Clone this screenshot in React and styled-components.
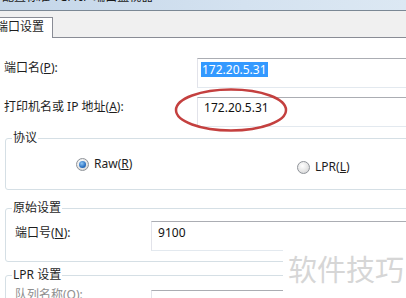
import React from 'react';
import styled, { createGlobalStyle } from 'styled-components';

const GlobalStyle = createGlobalStyle`
 html, body {
   margin: 0;
   padding: 0;
   background: #fff;
   overflow: hidden;
 }
`;

const Frame = styled.div`
 position: relative;
 width: 406px;
 height: 298px;
 overflow: hidden;
 background: #fff;
 font-family: "Noto Sans", "Noto Sans CJK SC", sans-serif;
 font-size: 12px;
 line-height: 16px;
 color: #1e1e1e;
`;

const TitleStrip = styled.div`
 height: 10px;
 display: flex;
 align-items: flex-end;
 overflow: hidden;
 padding-left: 2px;
 background: linear-gradient(90deg, #c3d5e8 0%, #d4e2f0 60%, #dce8f3 100%);
 border-bottom: 1px solid #7b8895;
`;

const TitleText = styled.div`
 margin-bottom: 5px;
 white-space: nowrap;
 color: #1a1a1a;
`;

const TabStrip = styled.div`
 box-sizing: border-box;
 height: 27px;
 display: flex;
 align-items: flex-end;
 background: #f0f0f0;
 border-bottom: 1px solid #898c95;
`;

const Tab = styled.div`
 position: relative;
 box-sizing: border-box;
 height: 21px;
 margin: 0 0 -1px -4px;
 padding: 1px 8px 0 0;
 background: #fff;
 border-top: 1px solid #898c95;
 border-right: 1px solid #898c95;
 white-space: nowrap;
`;

const Content = styled.div`
 padding-top: 20px;
 width: 470px;
`;

const FormRow = styled.div`
 display: grid;
 grid-template-columns: ${p => p.$labelWidth}px 280px;
 align-items: start;
 padding-left: ${p => p.$indent}px;
 margin-top: ${p => p.$top || 0}px;
`;

const Label = styled.div`
 padding-top: ${p => p.$pad}px;
 white-space: nowrap;
 color: ${p => (p.$disabled ? '#8e8e8e' : '#1e1e1e')};
`;

const Field = styled.div`
 box-sizing: border-box;
 height: 30px;
 margin-top: ${p => p.$mt || 0}px;
 padding: ${p => p.$pad}px 4px 0 3px;
 border: 1px solid;
 border-color: #abadb3 #dbdfe6 #e3e9ef #e2e3ea;
 background: #fff;
 white-space: nowrap;
 color: #111;
`;

const Selected = styled.span`
 display: inline-block;
 padding: 0 1px;
 line-height: 15px;
 background: #3399ff;
 color: #fff;
`;

const Group = styled.fieldset`
 margin: ${p => p.$top}px 0 0 5px;
 padding: ${p => p.$padTop}px 0 ${p => p.$padBottom}px 0;
 border: 1px solid #d5dfe5;
 border-radius: 3px;
 min-width: 0;
`;

const Legend = styled.legend`
 margin-left: 6px;
 padding: 0 1px;
 line-height: 16px;
`;

const Options = styled.div`
 display: grid;
 grid-template-columns: 221px auto;
 align-items: start;
 padding-left: 70px;
`;

const Option = styled.div`
 display: flex;
 align-items: center;
 gap: 5px;
 margin-top: ${p => p.$drop || 0}px;
`;

const Radio = styled.span`
 position: relative;
 box-sizing: border-box;
 width: 13px;
 height: 13px;
 border-radius: 50%;
 border: 1px solid #8f9399;
 background: radial-gradient(circle at 40% 35%, #ffffff 0%, #e6e6e6 55%, #c9cbce 100%);

 &::after {
   content: '';
   display: ${p => (p.$checked ? 'block' : 'none')};
   position: absolute;
   left: 2px;
   top: 2px;
   width: 7px;
   height: 7px;
   border-radius: 50%;
   background: radial-gradient(circle at 40% 35%, #8fc6f5 0%, #2a71c2 60%, #164d91 100%);
 }
`;

const Ellipse = styled.svg`
 position: absolute;
 left: 174px;
 top: 87px;
 overflow: visible;
`;

const Watermark = styled.div`
 position: absolute;
 right: 0;
 bottom: 0;
 box-sizing: border-box;
 width: 123px;
 height: 53px;
 padding: 8px 0 0 5px;
 background: #fff;
 font-family: "Noto Sans CJK SC", sans-serif;
 font-size: 29px;
 line-height: 30px;
 color: #d6d6d6;
 white-space: nowrap;
`;

const App = () => {
  return (
    <Frame>
      <GlobalStyle />
      <TitleStrip>
        <TitleText>配置标准 TCP/IP 端口监视器</TitleText>
      </TitleStrip>
      <TabStrip>
        <Tab>端口设置</Tab>
      </TabStrip>
      <Content>
        <FormRow $labelWidth={193} $indent={4}>
          <Label $pad={2}>端口名(<u>P</u>):</Label>
          <Field $pad={3}><Selected>172.20.5.31</Selected></Field>
        </FormRow>
        <FormRow $labelWidth={193} $indent={4} $top={9}>
          <Label $pad={2}>打印机名或 IP 地址(<u>A</u>):</Label>
          <Field $pad={2}>&nbsp;172.20.5.31</Field>
        </FormRow>

        <Group $top={3} $padTop={10} $padBottom={14}>
          <Legend>协议</Legend>
          <Options>
            <Option>
              <Radio $checked />
              <span>Raw(<u>R</u>)</span>
            </Option>
            <Option $drop={3}>
              <Radio />
              <span>LPR(<u>L</u>)</span>
            </Option>
          </Options>
        </Group>

        <Group $top={10} $padTop={5} $padBottom={10}>
          <Legend>原始设置</Legend>
          <FormRow $labelWidth={136} $indent={9}>
            <Label $pad={4}>端口号(<u>N</u>):</Label>
            <Field $pad={3}>&nbsp;9100</Field>
          </FormRow>
        </Group>

        <Group $top={5} $padTop={4} $padBottom={10}>
          <Legend>LPR 设置</Legend>
          <FormRow $labelWidth={136} $indent={9}>
            <Label $pad={0} $disabled>队列名称(<u>Q</u>):</Label>
            <Field $pad={3} $mt={3} />
          </FormRow>
        </Group>
      </Content>

      <Ellipse width="116" height="46" viewBox="0 0 116 46">
        <ellipse cx="57" cy="23" rx="55" ry="20.5" fill="none" stroke="#c4403f" strokeWidth="2.5" />
      </Ellipse>

      <Watermark>软件技巧</Watermark>
    </Frame>
  );
};

export default App;
